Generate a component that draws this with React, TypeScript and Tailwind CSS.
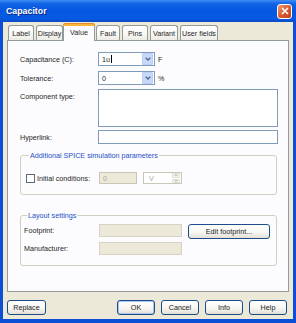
import React from "react";

/* ===============================
   DATA
=============================== */
const tabs = [
  { name: "Label", cls: "w-[26px]" },
  { name: "Display", cls: "ml-[2px] w-[27px]" },
  { name: "Value", cls: "w-[32px]", active: true },
  { name: "Fault", cls: "ml-[1px] w-[24px]" },
  { name: "Pins", cls: "ml-[2px] w-[26px]" },
  { name: "Variant", cls: "ml-[2px] w-[28px]" },
  { name: "User fields", cls: "ml-[2px] w-[38px]" },
];

const xpButton =
  "flex h-[15px] items-center justify-center rounded-[3px] border border-[#1C4C8A] bg-[linear-gradient(180deg,#FFFFFF_0%,#F6F6F2_55%,#E3E0D6_100%)] text-[#222]";

function Chevron() {
  return (
    <svg width="6" height="4" viewBox="0 0 6 4">
      <path d="M0.6 0.6 L3 3 L5.4 0.6" fill="none" stroke="#4D6185" strokeWidth="1.3" />
    </svg>
  );
}

function Combo({ value, caret }: { value: string; caret?: boolean }) {
  return (
    <div className="flex h-[14px] w-[57px] items-center border border-[#7F9DB9] bg-white">
      <span className="flex flex-1 items-center pl-[3px]">
        {value}
        {caret && <span className="ml-[0.5px] inline-block h-[8px] w-px bg-black" />}
      </span>
      <span className="mr-[1px] flex h-[12px] w-[11px] items-center justify-center rounded-[1px] border border-[#B9CDF6] bg-[#C8D8FB]">
        <Chevron />
      </span>
    </div>
  );
}

export default function App() {
  return (
    <div className="flex h-[323px] w-[296px] flex-col bg-[#0A4FD6] font-['Liberation_Sans',Arial,sans-serif] text-[7.2px] leading-[9px] text-[#262626]">
      {/* ================= TITLE BAR ================= */}
      <div className="flex h-[22px] items-center bg-[linear-gradient(180deg,#3F8CF3_0%,#0F61E6_18%,#0457DE_50%,#0659E2_85%,#0B4BC6_100%)] pl-[6px] pr-[4px]">
        <span className="flex-1 text-[8.8px] font-bold text-white [text-shadow:1px_1px_#0C2A8A]">
          Capacitor
        </span>
        <span className="flex h-[15px] w-[15px] items-center justify-center rounded-[3px] border border-white bg-[linear-gradient(135deg,#EE9A78_0%,#D8572E_55%,#C0401C_100%)]">
          <svg width="8" height="8" viewBox="0 0 8 8">
            <path d="M1 1 L7 7 M7 1 L1 7" stroke="white" strokeWidth="1.6" />
          </svg>
        </span>
      </div>

      {/* ================= BODY ================= */}
      <div className="mx-[3px] mb-[4px] flex flex-1 flex-col bg-[#ECE9D8] px-[4px]">
        {/* TABS */}
        <div className="mt-[1px] flex h-[17px] items-end pl-[1px]">
          {tabs.map((t) =>
            t.active ? (
              <div
                key={t.name}
                className={`relative z-10 -mb-[1px] flex h-[18px] flex-col rounded-t-[3px] border-x border-[#919B9C] bg-[#FCFCFE] ${t.cls}`}
              >
                <div className="-mx-[1px] h-[3px] rounded-t-[3px] bg-[#F7B53B] shadow-[inset_0_1px_0_#E68B2C]" />
                <div className="flex flex-1 items-center justify-center pb-[2px]">{t.name}</div>
              </div>
            ) : (
              <div
                key={t.name}
                className={`flex h-[15px] items-center justify-center rounded-t-[3px] border-x border-t border-[#919B9C] bg-[linear-gradient(180deg,#FFFFFF_0%,#F7F7F4_60%,#ECEBE4_100%)] ${t.cls}`}
              >
                {t.name}
              </div>
            )
          )}
        </div>

        {/* PANEL */}
        <div className="flex h-[252px] flex-col border border-[#919B9C] bg-[#FCFCFE]">
          <div className="mt-[11px] flex items-center pl-[12px]">
            <span className="w-[78px]">Capacitance (C):</span>
            <Combo value="1u" caret />
            <span className="ml-[3px]">F</span>
          </div>

          <div className="mt-[5px] flex items-center pl-[12px]">
            <span className="w-[78px]">Tolerance:</span>
            <Combo value="0" />
            <span className="ml-[3px]">%</span>
          </div>

          <div className="mt-[4px] flex items-start pl-[12px]">
            <span className="mt-[3px] w-[78px]">Component type:</span>
            <div className="h-[38px] w-[180px] border border-[#7F9DB9] bg-white" />
          </div>

          <div className="mt-[3px] flex items-center pl-[12px]">
            <span className="w-[78px]">Hyperlink:</span>
            <div className="h-[14px] w-[180px] border border-[#7F9DB9] bg-white" />
          </div>

          {/* SPICE GROUP */}
          <fieldset className="ml-[12px] mr-[11px] mt-[7px] rounded-[3px] border border-[#D0D0BF] pb-[10px] pl-[5px]">
            <legend className="ml-[3px] px-[1px] text-[#1E4FC8]">
              Additional SPICE simulation parameters
            </legend>
            <div className="mt-[12px] flex h-[12px] items-center">
              <span className="h-[9px] w-[9px] border border-[#5B6B7E] bg-white" />
              <span className="ml-[2px] w-[62px]">Initial conditions:</span>
              <div className="flex h-[12px] w-[38px] items-center border border-[#C9C7BA] bg-[#ECE9D8] pl-[3px] text-[#ACA899]">
                0
              </div>
              <div className="ml-[6px] flex h-[12px] w-[39px] items-center border border-[#C9C7BA] bg-white pl-[5px] text-[#ACA899]">
                <span className="flex-1">V</span>
                <span className="mr-[1px] flex h-[10px] w-[8px] flex-col gap-px">
                  <span className="flex flex-1 items-center justify-center rounded-[1px] border border-[#E0DED3] bg-[#F4F3EE]">
                    <svg width="4" height="2" viewBox="0 0 4 2">
                      <path d="M0 2 L2 0 L4 2 Z" fill="#C8C6BA" />
                    </svg>
                  </span>
                  <span className="flex flex-1 items-center justify-center rounded-[1px] border border-[#E0DED3] bg-[#F4F3EE]">
                    <svg width="4" height="2" viewBox="0 0 4 2">
                      <path d="M0 0 L2 2 L4 0 Z" fill="#C8C6BA" />
                    </svg>
                  </span>
                </span>
              </div>
            </div>
          </fieldset>

          {/* LAYOUT GROUP */}
          <fieldset className="ml-[12px] mr-[11px] mt-[16px] rounded-[3px] border border-[#D0D0BF] pb-[10px] pl-[3px]">
            <legend className="ml-[3px] px-[1px] text-[#1E4FC8]">Layout settings</legend>
            <div className="mt-[4px] flex items-start">
              <span className="mt-[2px] w-[75px]">Footprint:</span>
              <div className="h-[13px] w-[83px] border border-[#D6D3C6] bg-[#ECE9D8]" />
              <button className={`ml-[6px] w-[82px] ${xpButton} h-[14px]`}>Edit footprint...</button>
            </div>
            <div className="mt-[3px] flex items-center">
              <span className="w-[75px]">Manufacturer:</span>
              <div className="h-[13px] w-[83px] border border-[#D6D3C6] bg-[#ECE9D8]" />
            </div>
          </fieldset>
        </div>

        {/* BUTTONS */}
        <div className="mt-[8px] flex items-center">
          <button className={`w-[39px] ${xpButton}`}>Replace</button>
          <div className="flex-1" />
          <button className={`w-[38px] shadow-[inset_0_0_0_1px_#AFC5EE] ${xpButton}`}>OK</button>
          <button className={`ml-[6px] w-[38px] ${xpButton}`}>Cancel</button>
          <button className={`ml-[6px] w-[38px] ${xpButton}`}>Info</button>
          <button className={`ml-[6px] w-[38px] ${xpButton}`}>Help</button>
          <div className="w-[2px]" />
        </div>
      </div>
    </div>
  );
}
